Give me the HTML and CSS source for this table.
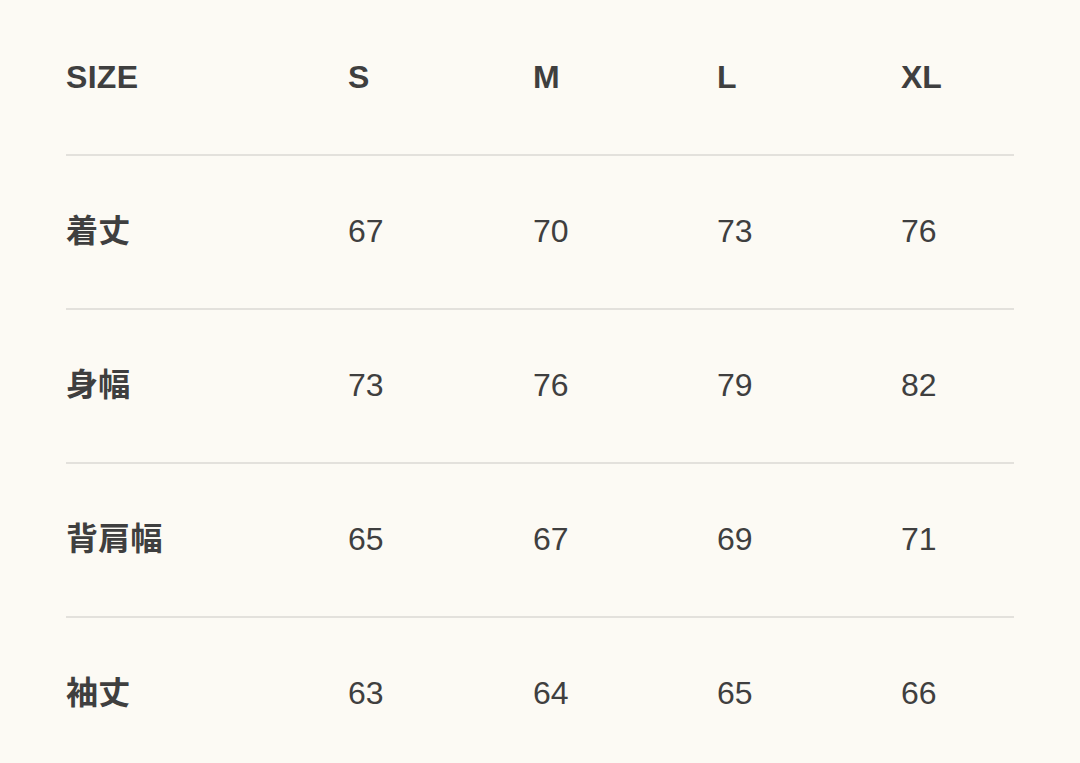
FILE: index.html
```html
<!DOCTYPE html>
<html lang="ja">
<head>
<meta charset="utf-8">
<title>Size chart</title>
<link rel="stylesheet" href="styles.css">
</head>
<body>
<div class="chart">
  <div class="row head">
    <div class="cell label">SIZE</div>
    <div class="cell">S</div>
    <div class="cell">M</div>
    <div class="cell">L</div>
    <div class="cell">XL</div>
  </div>
  <div class="row">
    <div class="cell label">着丈</div>
    <div class="cell">67</div>
    <div class="cell">70</div>
    <div class="cell">73</div>
    <div class="cell">76</div>
  </div>
  <div class="row">
    <div class="cell label">身幅</div>
    <div class="cell">73</div>
    <div class="cell">76</div>
    <div class="cell">79</div>
    <div class="cell">82</div>
  </div>
  <div class="row">
    <div class="cell label">背肩幅</div>
    <div class="cell">65</div>
    <div class="cell">67</div>
    <div class="cell">69</div>
    <div class="cell">71</div>
  </div>
  <div class="row last">
    <div class="cell label">袖丈</div>
    <div class="cell">63</div>
    <div class="cell">64</div>
    <div class="cell">65</div>
    <div class="cell">66</div>
  </div>
</div>
</body>
</html>
```

FILE: styles.css
```css
html, body {
  margin: 0;
  padding: 0;
  background: #fcfaf4;
}
body {
  font-family: "Liberation Sans", Arial, "Noto Sans CJK JP", sans-serif;
  color: #3f3f3f;
}
.chart {
  width: 948px;
  margin: 0 0 0 66px;
  padding-top: 2px;
}
.row {
  display: grid;
  grid-template-columns: 282px 185px 184px 184px 1fr;
  height: 152px;
  align-items: center;
  border-bottom: 2px solid #e3e1dc;
}
.row.last {
  border-bottom: none;
}
.cell {
  font-size: 32px;
  line-height: 1;
  padding-bottom: 2px;
  white-space: nowrap;
}
.head .cell,
.cell.label {
  font-weight: bold;
}
.cell.label {
  letter-spacing: 0.3px;
}
```
